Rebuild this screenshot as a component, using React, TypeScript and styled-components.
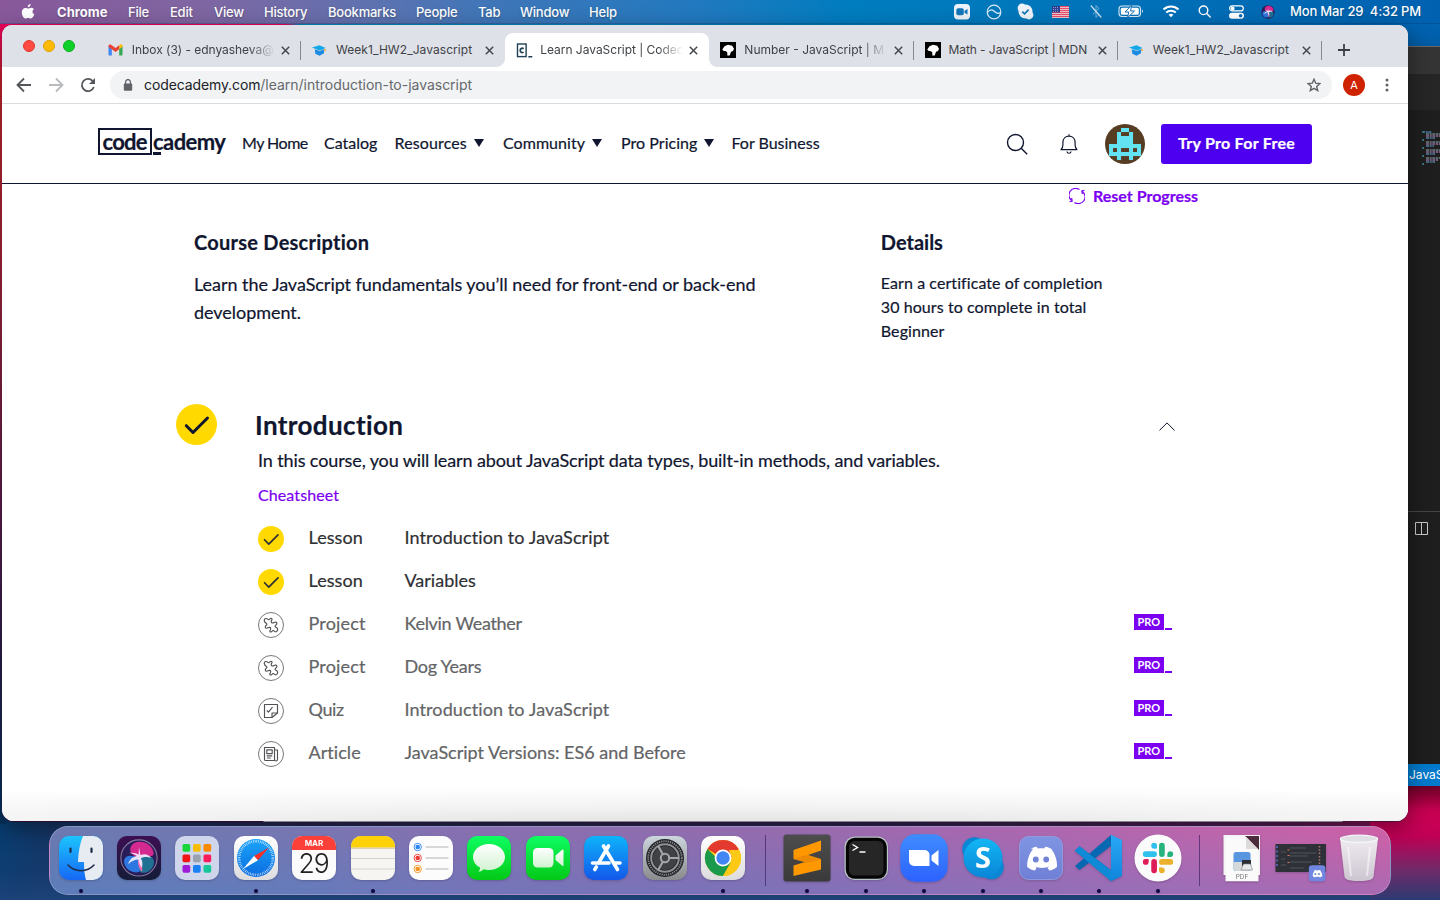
import React from 'react';
import styled, { createGlobalStyle, css } from 'styled-components';

const ui = '"Inter", "Liberation Sans", sans-serif';
const brand = '"Lato", "Liberation Sans", sans-serif';
const navy = '#10162f';
const violet = '#7b00f2';

const GlobalStyle = createGlobalStyle`
  * { box-sizing: border-box; }
  body { margin: 0; overflow: hidden; }
  h1, h2, p, ul { margin: 0; padding: 0; }
  svg { display: block; flex: none; }
`;

/* ---------- desktop ---------- */

const Desktop = styled.div`
  position: relative;
  width: 1440px;
  height: 900px;
  overflow: hidden;
  font-family: ${ui};
  background:
    linear-gradient(180deg, transparent 780px, rgba(24, 63, 118, 0.55) 870px, #1c4278 900px),
    linear-gradient(90deg, #003c6e 0, #14305c 50px, #2c1a40 300px, #3a1640 900px, #6a1040 1300px, #cc0050 1440px);
`;

const WallpaperTop = styled.div`
  position: absolute;
  top: 24px;
  left: 0;
  width: 1440px;
  height: 30px;
  background: linear-gradient(90deg, #ee005c 0 285px, #0088b8 300px, #0079b8 900px, #0062b0 1440px);
`;

const WallpaperEdge = styled.div`
  position: absolute;
  top: 24px;
  left: 0;
  width: 6px;
  height: 800px;
  background: linear-gradient(180deg, #ee005c 0, #c0262c 60px, #a5243a 240px, #5c1d4c 480px, #28204a 640px, #06325f 800px);
`;

const MenuBar = styled.header`
  position: relative;
  display: flex;
  align-items: center;
  height: 24px;
  color: #fff;
  font-size: 13px;
  font-weight: 500;
  letter-spacing: -0.22px;
  text-shadow: 0 1px 2px rgba(0, 0, 0, 0.25);
  background: linear-gradient(90deg, #88589a 0, #7f66a2 200px, #5f72b0 370px, #4176b8 480px, #2179bf 700px, #007dbf 850px, #0078bc 1000px, #0061b0 1440px);
  border-bottom: 1px solid rgba(0, 30, 80, 0.2);
`;

const AppleSlot = styled.div`
  width: 57px;
  padding-left: 21px;
`;

const MenuItem = styled.span<{ $w: number; $bold?: boolean }>`
  width: ${(p) => p.$w}px;
  padding-top: 1px;
  white-space: nowrap;
  ${(p) => p.$bold && css`font-weight: 700; letter-spacing: 0.05px;`}
`;

const StatusArea = styled.div`
  display: grid;
  grid-template-columns: 32px 31px 32px 38px 33px 38px 42px 24px 40px 23px;
  align-items: center;
  justify-items: center;
  margin-left: auto;
`;

const Clock = styled.time`
  width: 161px;
  padding: 0 0 1px 11px;
  white-space: pre;
  letter-spacing: -0.17px;
`;

/* ---------- editor window behind ---------- */

const EditorWindow = styled.section`
  position: absolute;
  top: 46px;
  left: 1380px;
  width: 80px;
  height: 740px;
  display: flex;
  flex-direction: column;
  padding-left: 28px;
  background: #1e1e1e;
  border-top: 1px solid #686868;
  box-shadow: 0 10px 26px rgba(0, 0, 0, 0.45);
`;
const EditorTitle = styled.div`
  height: 27px;
  background: #343435;
`;
const EditorTabs = styled.div`
  height: 36px;
  background: #262627;
`;
const EditorPane = styled.div`
  height: 401px;
  padding: 21px 0 0 14px;
`;
const EditorPanel = styled.div`
  flex: 1;
  border-top: 1px solid #454545;
  padding: 10px 0 0 7px;
`;
const EditorStatus = styled.div`
  height: 22px;
  line-height: 21px;
  font-size: 12px;
  color: #fff;
  padding-left: 1px;
  background: #007acc;
`;
const PinkGlow = styled.div`
  position: absolute;
  top: 786px;
  left: 1370px;
  width: 70px;
  height: 114px;
  background: linear-gradient(180deg, #a8003c 0, #cf0055 24px, #c00055 50px, #6f2a68 84px, #2c3a72 114px);
`;

/* ---------- browser window ---------- */

const BrowserWindow = styled.main`
  position: absolute;
  top: 25px;
  left: 2px;
  width: 1406px;
  height: 796px;
  display: flex;
  flex-direction: column;
  overflow: hidden;
  border-radius: 10px 10px 12px 12px;
  background: #fff;
`;
const WindowShadow = styled.div`
  position: absolute;
  top: 25px;
  left: 2px;
  width: 1406px;
  height: 797px;
  border-radius: 10px 10px 12px 12px;
  background: linear-gradient(90deg, #2d0c32 261px, #8a838f 262px 1340px, #4a1238 1341px);
  box-shadow: 0 6px 22px rgba(0, 0, 0, 0.4);
`;

const TabStrip = styled.div`
  display: flex;
  align-items: flex-end;
  height: 42px;
  background: #dee1e8;
`;
const TrafficLights = styled.div`
  display: flex;
  gap: 8px;
  width: 94.8px;
  height: 42px;
  padding: 15px 0 0 21px;
`;
const Light = styled.span<{ $c: string; $b: string }>`
  width: 12px;
  height: 12px;
  border-radius: 50%;
  background: ${(p) => p.$c};
  border: 1px solid ${(p) => p.$b};
`;
const Tab = styled.div<{ $active?: boolean; $line?: boolean }>`
  position: relative;
  display: flex;
  align-items: center;
  width: 204.2px;
  height: 34px;
  padding: 0 8px 0 11px;
  border-radius: 8px 8px 0 0;
  color: #3f4246;
  ${(p) => p.$active && css`
    background: #fff;
    &::before, &::after {
      content: '';
      position: absolute;
      bottom: 0;
      width: 8px;
      height: 8px;
    }
    &::before { left: -8px; background: radial-gradient(circle at 0 0, transparent 7.5px, #fff 8px); }
    &::after { right: -8px; background: radial-gradient(circle at 100% 0, transparent 7.5px, #fff 8px); }
  `}
  ${(p) => p.$line && css`
    &::after {
      content: '';
      position: absolute;
      right: 0;
      top: 8px;
      width: 1px;
      height: 19px;
      background: #85888d;
    }
  `}
`;
const TabIcon = styled.span`
  width: 24px;
`;
const TabTitle = styled.span<{ $fade?: boolean; $ls?: number }>`
  flex: 1;
  overflow: hidden;
  white-space: nowrap;
  font-size: 12px;
  line-height: 16px;
  letter-spacing: ${(p) => p.$ls ?? 0.06}px;
  ${(p) => p.$fade && css`mask-image: linear-gradient(90deg, #000 118px, transparent 143px);`}
`;
const TabClose = styled.span`
  width: 15px;
  display: flex;
  justify-content: center;
`;
const NewTab = styled.span`
  display: flex;
  align-items: center;
  height: 34px;
  padding-left: 16px;
`;

const Toolbar = styled.div`
  display: flex;
  align-items: center;
  height: 37px;
  background: #fff;
  border-bottom: 1px solid #dadce0;
`;
const NavButtons = styled.div`
  display: grid;
  grid-template-columns: 32px 32px 32px;
  justify-items: center;
  width: 108px;
  padding-left: 6px;
`;
const Omnibox = styled.div`
  display: flex;
  align-items: center;
  width: 1222px;
  height: 28px;
  padding: 0 11px 0 12px;
  border-radius: 14px;
  background: #f1f3f4;
`;
const Url = styled.span`
  flex: 1;
  padding: 0 0 1px 10px;
  font-size: 14px;
  color: #66696d;
  letter-spacing: -0.02px;
`;
const Host = styled.span`
  color: #202124;
  letter-spacing: -0.11px;
`;
const Profile = styled.span`
  display: grid;
  place-items: center;
  width: 22px;
  height: 22px;
  margin: 0 16px 0 11px;
  border-radius: 50%;
  background: #cf2200;
  color: #fff;
  font-size: 11px;
`;

/* ---------- site ---------- */

const Site = styled.div`
  flex: 1;
  font-family: ${brand};
  font-variant-ligatures: none;
  -webkit-text-stroke: 0.2px;
  color: ${navy};
  background:
    radial-gradient(ellipse 1380px 38px at 50% 106%, #e2e2e2 0, rgba(238, 238, 238, 0.7) 45%, rgba(255, 255, 255, 0) 100%) bottom / 100% 38px no-repeat,
    #fff;
`;
const SiteHeader = styled.header`
  display: flex;
  align-items: center;
  height: 80px;
  padding: 0 96px;
  border-bottom: 1px solid ${navy};
`;
const Logo = styled.div`
  display: flex;
  align-items: flex-start;
  width: 144px;
  height: 27px;
  margin-top: -5px;
  font-size: 22px;
  font-weight: 700;
  line-height: 24px;
`;
const LogoBox = styled.span`
  width: 54px;
  height: 27px;
  padding-left: 2.5px;
  border: 2.5px solid ${navy};
  letter-spacing: -0.75px;
`;
const LogoTail = styled.span`
  position: relative;
  padding: 2px 0 1px 1px;
  letter-spacing: -0.55px;
  &::after {
    content: '';
    position: absolute;
    left: 1px;
    bottom: 0;
    width: 8px;
    height: 2.5px;
    background: ${navy};
  }
`;
const SiteNav = styled.nav`
  display: grid;
  grid-template-columns: 82px 70.5px 108.5px 118px 110.5px 100px;
  padding-bottom: 2px;
  font-size: 16px;
`;
const NavLink = styled.a<{ $ls?: number }>`
  display: flex;
  align-items: center;
  gap: 7px;
  white-space: nowrap;
  letter-spacing: ${(p) => p.$ls ?? 0}px;
  svg { margin-top: 1px; }
`;
const Actions = styled.div`
  display: flex;
  align-items: center;
  margin-left: auto;
`;
const BellSlot = styled.span`
  margin: 0 27px 0 32px;
`;
const TryPro = styled.button`
  width: 151px;
  height: 40px;
  margin-left: 16px;
  padding: 0 0 3px;
  border: 0;
  border-radius: 3px;
  background: #4d00f0;
  color: #fff;
  font: 700 16px ${brand};
  letter-spacing: 0.27px;
`;
const ResetRow = styled.div`
  display: flex;
  align-items: center;
  gap: 8px;
  height: 22px;
  margin-bottom: 2px;
  padding-left: 1067px;
  font-size: 16px;
  font-weight: 700;
  color: ${violet};
  svg { margin-top: 2px; }
`;
const Overview = styled.section`
  display: grid;
  grid-template-columns: 686.8px 1fr;
  height: 196px;
  padding: 20px 0 0 192px;
`;
const Subheading = styled.h2<{ $ls?: number }>`
  font-size: 20px;
  font-weight: 700;
  line-height: 28px;
  letter-spacing: ${(p) => p.$ls ?? 0}px;
`;
const Lead = styled.p`
  width: 590px;
  margin-top: 14px;
  font-size: 18px;
  line-height: 28px;
  letter-spacing: -0.04px;
`;
const Details = styled.ul`
  margin-top: 15px;
  list-style: none;
  font-size: 16px;
  line-height: 24px;
  letter-spacing: 0.08px;
`;
const ModuleHeader = styled.div`
  display: flex;
  align-items: center;
  width: 1173px;
  height: 41px;
  padding-left: 174px;
`;
const ModuleTitle = styled.h1`
  flex: 1;
  padding-left: 38px;
  font-size: 26px;
  font-weight: 700;
  line-height: 36px;
  letter-spacing: 0.38px;
`;
const ModuleChevron = styled.span`
  margin-top: 4px;
`;
const ModuleBody = styled.div`
  width: 1170px;
  padding-left: 256px;
`;
const ModuleText = styled.p`
  margin-top: 1px;
  font-size: 18px;
  line-height: 28px;
  letter-spacing: -0.115px;
`;
const Cheatsheet = styled.a`
  display: block;
  margin: 9px 0 9.5px;
  font-size: 16px;
  line-height: 24px;
  letter-spacing: 0.1px;
  color: ${violet};
`;
const LessonRow = styled.div<{ $done?: boolean }>`
  display: grid;
  grid-template-columns: 50.5px 96px 1fr 38px;
  align-items: center;
  height: 43px;
  font-size: 18px;
  line-height: 26px;
  letter-spacing: 0.06px;
  color: ${(p) => (p.$done ? '#2f3033' : '#636466')};
`;
const LessonText = styled.span<{ $ls?: number }>`
  padding-bottom: 2px;
  letter-spacing: ${(p) => p.$ls ?? 0.06}px;
`;
const LessonIcon = styled.span`
  padding-top: 2px;
`;
const ProBadge = styled.span`
  display: flex;
  align-items: flex-end;
  gap: 1.5px;
  height: 16px;
  margin-top: -4px;
  &::after {
    content: '';
    width: 7px;
    height: 2.5px;
    background: ${violet};
  }
`;
const ProLabel = styled.span`
  width: 29.5px;
  height: 16px;
  background: ${violet};
  color: #fff;
  font-size: 11px;
  font-weight: 700;
  line-height: 16px;
  text-align: center;
  letter-spacing: 0;
  -webkit-text-stroke: 0;
`;

/* ---------- dock ---------- */

const Dock = styled.footer`
  position: absolute;
  top: 826px;
  left: 49px;
  width: 1342px;
  height: 69px;
  display: flex;
  padding: 7px 0 0 1.5px;
  border-radius: 19px;
  border: 1px solid rgba(255, 255, 255, 0.22);
  background:
    linear-gradient(180deg, rgba(255, 90, 160, 0.07), rgba(80, 130, 210, 0.28)),
    linear-gradient(90deg, #617bb0 0, #6d78b2 250px, #8070b0 420px, #8c6cae 700px, #a468b0 950px, #b866ac 1150px, #cc60a6 1342px);
`;
const DockSlot = styled.div<{ $dot?: boolean }>`
  display: flex;
  flex-direction: column;
  align-items: center;
  gap: 7px;
  width: 58.4px;
  filter: drop-shadow(0 1px 1px rgba(0, 0, 0, 0.18));
  ${(p) => p.$dot && css`
    &::after {
      content: '';
      width: 4px;
      height: 4px;
      border-radius: 50%;
      background: #0d0640;
    }
  `}
`;
const DockDivider = styled.div`
  width: 26px;
  display: flex;
  justify-content: center;
  padding-top: 1px;
  &::after {
    content: '';
    width: 1px;
    height: 51px;
    background: rgba(50, 20, 90, 0.6);
  }
`;

/* ---------- icons ---------- */

const Apple = () => (
  <svg width="14" height="17" viewBox="0 0 14 17" fill="#fff">
    <path d="M9.6 1c.1 1.700-1.300 3.300-2.900 3.200C6.500 2.700 8 1.100 9.600 1zM12.900 6.300c-2 1.200-1.800 4.100.4 5-.6 1.800-1.900 4.200-3.400 4.200-1 0-1.400-.6-2.700-.6s-1.700.6-2.700.6C2.600 15.600.8 12.200.8 9.300c0-2.700 1.700-4.400 3.600-4.400 1.200 0 2.100.7 2.800.7.700 0 1.700-.8 3.200-.8 1 0 1.900.5 2.500 1.500z" />
  </svg>
);

const SiriOrb = () => (
  <>
    <circle cx="24" cy="24" r="23" fill="#2a1c58" />
    <path d="M24 24C8 20 10 4 24 3s20 12 19 16-12 4-19 5z" fill="#d42a90" />
    <path d="M24 24C6 16 2 26 6 34s14 10 18 8 2-12 0-18z" fill="#2c78e0" />
    <path d="M24 24c14-6 22 0 19 9s-12 11-16 10-3-12-3-19z" fill="#1f7f9c" opacity=".85" />
    <path d="M23 24c4 5 6 12 5 18-4-3-6-11-5-18z" fill="#ff6fb4" />
    <path d="M24 10c1 5 1.500 8 2 10 6-2 10-1 14 4-7-2-10-1-13.500.5 2 3 2.500 7 1.500 12-3-3-4-7-4.500-10.500-5 0-9 2-13.500 6 1.500-6 6-9.500 11-10.500-3-2.500-6-3.500-10-4 5-1 9 0 12.500 2z" fill="#f4efff" opacity=".9" />
  </>
);

const StatusIcons = () => (
  <StatusArea>
    <svg width="16" height="16" viewBox="0 0 16 16"><rect width="16" height="15.500" rx="4" fill="#eef3fa" /><rect x="2.300" y="4.300" width="7.500" height="7" rx="1.800" fill="#1476b8" /><path d="M10.500 6.800L13.500 5v5.600l-3-1.800z" fill="#1476b8" /></svg>
    <svg width="16" height="16" viewBox="0 0 16 16" fill="none" stroke="#e2ecf7" strokeWidth="1.200"><circle cx="8" cy="8" r="6.800" /><path d="M1.500 8.500C4.500 4.500 7 6 8.500 7.500s3.500 2.800 6 1" /></svg>
    <svg width="17" height="17" viewBox="0 0 17 17"><circle cx="8.500" cy="8.500" r="7" fill="#eef3fa" /><circle cx="5" cy="5" r="4.400" fill="#eef3fa" /><circle cx="12" cy="12" r="4.400" fill="#eef3fa" /><path d="M5.300 8.600l2.300 2.300 4-4.300" fill="none" stroke="#1476b8" strokeWidth="1.700" /></svg>
    <svg width="17" height="12" viewBox="0 0 17 12"><rect width="17" height="12" fill="#f5e8ea" />{[0, 2, 4, 6, 8, 10].map((y) => <rect key={y} y={y + 0.2} width="17" height="1" fill="#e5274a" />)}<rect width="8" height="6.500" fill="#2f3f92" />{[1.500, 3.500, 5.500].map((x) => [1.500, 3.500, 5.200].map((y) => <circle key={x + '-' + y} cx={x} cy={y} r=".45" fill="#fff" />))}</svg>
    <svg width="12" height="15" viewBox="0 0 12 15" fill="none" stroke="#9fc6e6" strokeWidth="1"><path d="M2.800 4.500L9 10.500 6 13.500v-12l3 3-6.200 6" opacity=".75" /><path d="M.8 1.500l10.500 12" stroke="#c7dff2" strokeWidth="1.200" /></svg>
    <svg width="26" height="13" viewBox="0 0 26 13"><rect x="1" y="1" width="21.500" height="10.500" rx="3" fill="none" stroke="#dbe8f5" strokeWidth="1.100" /><rect x="2.800" y="2.800" width="18" height="7" rx="1.500" fill="#fff" /><path d="M24 4.500v3.600c1.200-.6 1.200-3 0-3.600z" fill="#dbe8f5" /><path d="M13.600.3L7 7h3.800l-1.300 5.700L16.500 6h-3.900z" fill="#fff" stroke="#1670b6" strokeWidth="1" /></svg>
    <svg width="18" height="13" viewBox="0 0 18 13" fill="none" stroke="#fff" strokeWidth="2"><path d="M1.500 4.600c4.300-4 10.700-4 15 0M4.200 7.500c2.700-2.500 6.900-2.500 9.600 0" /><path d="M9 12.300L6.600 9.700c1.300-1.200 3.500-1.200 4.800 0z" fill="#fff" stroke="none" /></svg>
    <svg width="13" height="13" viewBox="0 0 13 13" fill="none" stroke="#fff" strokeWidth="1.400"><circle cx="5.500" cy="5.300" r="4.300" /><path d="M8.700 8.500l3.500 3.600" strokeLinecap="round" /></svg>
    <svg width="15" height="14" viewBox="0 0 15 14"><rect x=".7" y=".9" width="13.600" height="5" rx="2.500" fill="none" stroke="#fff" strokeWidth="1.200" /><circle cx="3.700" cy="3.400" r="1.900" fill="#fff" /><rect y="7.800" width="15" height="6" rx="3" fill="#fff" /><circle cx="11.600" cy="10.800" r="1.800" fill="#0a6bb4" /></svg>
    <svg width="14" height="14" viewBox="0 0 48 48"><SiriOrb /></svg>
  </StatusArea>
);

const GmailIcon = () => (
  <svg width="15" height="12" viewBox="0 0 15 12"><path d="M.5 2v8.500c0 .6.400 1 1 1h2.300V4.500z" fill="#4285f4" /><path d="M14.500 2v8.500c0 .6-.4 1-1 1h-2.300V4.500z" fill="#34a853" /><path d="M11.200 1.300v4l3.300-2.500V1.800c0-1.300-1.400-1.900-2.400-1.200z" fill="#fbbc04" /><path d="M.5 2.800l3.300 2.500L7.500 8l3.700-2.700v-4L7.500 4 3 .7C1.900 0 .5.600.5 1.900z" fill="#ea4335" /></svg>
);
const CapIcon = () => (
  <svg width="14" height="11" viewBox="0 0 14 11"><path d="M0 2.600L7.500.3 13.500 3 8 5.700z" fill="#13a8e8" /><path d="M2.800 4.300L8 6.300l4-2v4L7.500 10.800 3.300 8.700z" fill="#1b8ae0" /><circle cx="13" cy="5" r="1" fill="#f2a33a" /></svg>
);
const CodecademyIcon = () => (
  <svg width="17" height="15" viewBox="0 0 17 15" fill="none" stroke="#204056"><rect x="1.500" y="1" width="8.600" height="12.600" strokeWidth="1.400" /><path d="M7.600 5.800c-1-1-3.400-.7-3.400 1.600s2.400 2.600 3.400 1.600" strokeWidth="1.700" /><path d="M12.300 13.800h4" strokeWidth="1.500" /></svg>
);
const MdnIcon = () => (
  <svg width="16" height="16" viewBox="0 0 16 16"><rect width="16" height="16" fill="#000" /><path d="M2.300 7.500L4.500 4.300 8 2.800l4.200.9 1.800 3-1 2.300-2 .8-1.300 3.600H7.300V10.500L6 9.300l-2.700-.5z" fill="#fff" /></svg>
);
const CloseIcon = () => (
  <svg width="9" height="9" viewBox="0 0 9 9" stroke="#45484c" strokeWidth="1.500"><path d="M.8.8l7.400 7.400M8.200.8L.8 8.200" /></svg>
);
const Caret = () => <svg width="10" height="8" viewBox="0 0 10 8"><path d="M0 0h10L5 8z" fill={navy} /></svg>;

const cells = ['...XX...', '..X..X..', '..XXXX..', '..XXXX..', 'XXXXXXXX', 'X.X..X.X', 'XXXXXXXX', '..X..X..'];
const UserAvatar = () => (
  <svg width="40" height="40" viewBox="0 0 40 40">
    <circle cx="20" cy="20" r="20" fill="#563c22" />
    {cells.flatMap((row, y) => [...row].map((c, x) => c === 'X' && <rect key={`${x}-${y}`} x={4 + x * 4} y={4 + y * 4} width="4.050" height="4.050" fill="#63e2f4" />))}
  </svg>
);

const DoneIcon = ({ size, color, weight }: { size: number; color: string; weight: number }) => (
  <svg width={size} height={size} viewBox="0 0 41 41"><circle cx="20.500" cy="20.500" r="20.500" fill="#ffd900" /><path d="M10.300 21.700l6.700 6.800L31.500 14" fill="none" stroke={color} strokeWidth={weight} strokeLinecap="round" strokeLinejoin="round" /></svg>
);

const kindGlyphs: Record<string, React.ReactNode> = {
  Project: <path d="M6.800 9.600C5.600 8 6.500 6.300 8.200 6.500c1.400.1 1.500 1.500 2.800 1.200.8-.2.900-1.500 2-1.500s1.300 1.300.6 2.200c-.8 1-.4 2.400.8 2.600 1.500.2 2-1.300 3.400-.9 1.200.4 1.400 1.700.6 2.600-.6.700-1.500.6-1.300 1.600.2 1.300 2.200 1 2.500 2.500.2 1.600-.7 3.300-2.200 3-1.200-.2-1.200-1.500-2.400-1.300-1 .2-.9 1.500-2 1.500-1.300 0-1.500-1.300-.7-2.200.8-1 .4-2.300-.8-2.400-1.300-.1-1.900 1.200-3.200.8-1.200-.4-1.300-1.700-.5-2.500.6-.6 1.400-.8 1.100-1.700-.3-1-1.500-1-2.100-1.900z" />,
  Quiz: <><path d="M19.500 6.500h-13v13H14l5.500-4.500z" /><path d="M14 19.500V15h5.500M8.800 12.500l1.700 1.700 4-5" /></>,
  Article: <><path d="M6.500 6.500h10v13h-9a1 1 0 01-1-1zM16.500 9h3v9.500a1.500 1.500 0 01-3 0" /><path d="M8.800 8.800h5.400v3.800H8.800zM8.800 14.800h5.400M8.800 17h4" /></>,
};
const KindIcon = ({ kind }: { kind: string }) => (
  <svg width="26" height="26" viewBox="0 0 26 26" fill="none" stroke="#505154" strokeWidth="1.150" strokeLinejoin="round"><circle cx="13" cy="13" r="12.500" strokeWidth="1" stroke="#77787a" />{kindGlyphs[kind]}</svg>
);

const Tile = ({ fill }: { fill: string }) => <rect x="2" y="2" width="44" height="44" rx="10" fill={fill} />;
const AppIcon = ({ children }: { children: React.ReactNode }) => <svg width="48" height="48" viewBox="0 0 48 48">{children}</svg>;

const Gradients = () => (
  <svg width="0" height="0">
    <defs>
      {([
        ['gFinder', '#1cc4fd', '#1668f5'], ['gSilver', '#ffffff', '#dcdcde'], ['gCompass', '#1ba4f8', '#0b6be0'],
        ['gGreen', '#0dfd62', '#04c916'], ['gBubble', '#ffffff', '#d0f2d0'], ['gStore', '#0db4fb', '#1457ea'],
        ['gGear', '#ccd6dd', '#8a8a8c'], ['gZoom', '#3f8cff', '#2d62ff'], ['gSkype', '#12b6f4', '#0a86d8'],
        ['gDiscord', '#7f95e2', '#6f7fd6'], ['gSublime', '#4d4d4d', '#3a3a3a'], ['gNight', '#3c0f52', '#141c38'],
        ['gTrash', '#f4f4f6', '#cfcdd4'], ['gCode', '#2aa8f5', '#0f84dc'],
      ] as const).map(([id, a, b]) => (
        <linearGradient key={id} id={id} x1="0" y1="0" x2="0" y2="1"><stop offset="0" stopColor={a} /><stop offset="1" stopColor={b} /></linearGradient>
      ))}
    </defs>
  </svg>
);
const GradientHost = styled.div`
  position: absolute;
  width: 0;
  height: 0;
`;

const discordFace = 'M15 15.500c3-1.500 4.500-1.600 5.200-1.700l1 1.600c1.800-.3 3.800-.3 5.600 0l1-1.600c.7.1 2.200.2 5.200 1.700 3.500 5 5.500 10.500 5 16-3 2.400-5.300 3-6.600 3.200l-1.700-2.500 2-1.200c-4.400 2-9 2-13.400 0l2 1.200-1.700 2.500c-1.300-.2-3.600-.8-6.600-3.200-.5-5.500 1.500-11 5-16z';

const FinderIcon = () => (
  <AppIcon><Tile fill="url(#gFinder)" /><path d="M26 2h10a10 10 0 0110 10v24a10 10 0 01-10 10h-7c-1.500-5-2-11-2-18h-6c.3-10 2-19 5-26z" fill="#e7ecf3" /><path d="M13.500 14.500v3.500M34.500 14.500v3.500" stroke="#1c2b48" strokeWidth="2.200" strokeLinecap="round" /><path d="M11 31c7 7.500 19 7.500 26 0" fill="none" stroke="#1c2b48" strokeWidth="1.500" strokeLinecap="round" /></AppIcon>
);
const SiriIcon = () => (
  <AppIcon><Tile fill="url(#gNight)" /><g transform="translate(5.500 5.500) scale(.77)"><SiriOrb /><circle cx="24" cy="24" r="23.500" fill="none" stroke="#9c93b4" strokeWidth="1.400" opacity=".8" /></g></AppIcon>
);
const padColors = ['#18d63a', '#f7bd05', '#fb8a05', '#f01414', '#9aa3ad', '#fa1c5c', '#a01bd8', '#1a80f5', '#17c79a'];
const LaunchpadIcon = () => (
  <AppIcon><Tile fill="#cfd5ea" />{padColors.map((c, i) => <rect key={c} x={9.500 + (i % 3) * 10.500} y={10 + Math.floor(i / 3) * 10.500} width="7.700" height="7.700" rx="1.600" fill={c} />)}</AppIcon>
);
const SafariIcon = () => (
  <AppIcon><Tile fill="url(#gSilver)" /><circle cx="24" cy="24" r="19" fill="url(#gCompass)" /><circle cx="24" cy="24" r="16.800" fill="none" stroke="#fff" strokeWidth="2.600" strokeDasharray=".6 1.160" opacity=".9" /><path d="M37 13.500L26 26.300 22 22z" fill="#f5302c" /><path d="M11 35L22 22l4 4.300z" fill="#fff" /></AppIcon>
);
const CalendarIcon = () => (
  <AppIcon><Tile fill="#fbfbfb" /><path d="M2 16v-4A10 10 0 0112 2h24a10 10 0 0110 10v4z" fill="#fa4039" /><text x="24" y="12.400" textAnchor="middle" fontFamily="Inter" fontSize="8" fontWeight="700" fill="#fff">MAR</text><text x="23.500" y="38.500" textAnchor="middle" fontFamily="Inter" fontSize="26.500" fontWeight="300" letterSpacing="-1" fill="#222">29</text></AppIcon>
);
const NotesIcon = () => (
  <AppIcon><Tile fill="#f7f5f2" /><path d="M2 13.500V12A10 10 0 0112 2h24a10 10 0 0110 10v1.500z" fill="#fdd107" /><path d="M2 14.200h44" stroke="#c8b98a" strokeWidth=".9" /><path d="M2 24.500h44M2 35h44" stroke="#d5d2ce" /></AppIcon>
);
const RemindersIcon = () => (
  <AppIcon><Tile fill="#fcfcfc" />{['#2a84f5', '#f13a35', '#f59420'].map((c, i) => <g key={c}><circle cx="10.700" cy={13 + i * 11} r="3.700" fill="none" stroke={c} strokeWidth=".9" /><circle cx="10.700" cy={13 + i * 11} r="2.300" fill={c} /><path d={`M18.500 ${13 + i * 11}h23`} stroke="#cfcfd1" strokeWidth="1.600" /></g>)}</AppIcon>
);
const MessagesIcon = () => (
  <AppIcon><Tile fill="url(#gGreen)" /><path d="M24 10c9 0 16 5.700 16 13s-7 13-16 13c-2 0-4-.3-5.500-.8-1.300 1.400-3 2.400-5 2.600 1-1.200 1.600-2.600 1.500-4.300C10.500 31 8 27.300 8 23c0-7.300 7-13 16-13z" fill="url(#gBubble)" /></AppIcon>
);
const FaceTimeIcon = () => (
  <AppIcon><Tile fill="url(#gGreen)" /><rect x="9" y="14" width="20.500" height="19.500" rx="4.500" fill="url(#gBubble)" /><path d="M31.500 21.500l7-6c.5-.3 1 0 1 .5v15.500c0 .5-.5.800-1 .5l-7-6z" fill="url(#gBubble)" /></AppIcon>
);
const AppStoreIcon = () => (
  <AppIcon><Tile fill="url(#gStore)" /><g stroke="#fff" strokeWidth="3.600" strokeLinecap="round"><path d="M26.500 12L16.500 29M21.500 12l14 23.500M10.500 29h16.500M32.500 29h5.500M14.300 33l-1.500 2.500" /></g></AppIcon>
);
const SettingsIcon = () => (
  <AppIcon><Tile fill="url(#gGear)" /><circle cx="24" cy="24" r="19" fill="#242528" /><circle cx="24" cy="24" r="16.800" fill="none" stroke="#8b8e92" strokeWidth="1.800" strokeDasharray="1.200 1" /><circle cx="24" cy="24" r="13.800" fill="none" stroke="#8e9195" strokeWidth="2" /><circle cx="24" cy="24" r="12" fill="#3f4144" /><circle cx="24" cy="24" r="4.200" fill="none" stroke="#a5a8ab" strokeWidth="2" /><path d="M28 24h10M22 20.500l-5-8.800M22 27.500l-5 8.800" stroke="#a5a8ab" strokeWidth="2" /></AppIcon>
);
const ChromeIcon = () => (
  <AppIcon><Tile fill="url(#gSilver)" /><circle cx="24" cy="24" r="18" fill="#fbc916" /><path d="M24 24L8.400 15A18 18 0 0139.600 15L24 16z" fill="#e23a2e" /><path d="M8.400 15a18 18 0 0015.600 27L31.800 28.500 24 30z" fill="#1c9a4c" /><path d="M39.600 15A18 18 0 0124 42l7.800-13.500L31 16z" fill="#fbc916" /><path d="M39.600 15H24v8h8z" fill="#e23a2e" /><path d="M39.600 16H30l2 6 9.800 0a18 18 0 00-2.200-6z" fill="#fbc916" /><circle cx="24" cy="24" r="8.400" fill="#fff" /><circle cx="24" cy="24" r="6.700" fill="#4285f4" /></AppIcon>
);
const SublimeIcon = () => (
  <AppIcon><rect x=".5" y=".5" width="47" height="47" rx="3" fill="url(#gSublime)" /><path d="M10.500 16L38 6.500v10L25 21l13 4v10.500L10.500 42V31.500L22 28l-11.500-3z" fill="#ff9800" /><path d="M10.500 25l12-4L38 25.500 24 29z" fill="#e07e08" opacity=".6" /></AppIcon>
);
const TerminalIcon = () => (
  <AppIcon><rect x="2.500" y="2.500" width="43.500" height="43.500" rx="10" fill="#b9c2c4" /><rect x="3.800" y="3.800" width="41" height="41" rx="9" fill="#050505" /><rect x="7" y="7" width="34.500" height="34.500" rx="5.500" fill="#262626" /><path d="M10.500 10.500l5 3-5 3M17.500 18h6" fill="none" stroke="#fff" strokeWidth="1.400" /></AppIcon>
);
const ZoomIcon = () => (
  <AppIcon><rect x=".3" y=".3" width="47.400" height="47.400" rx="15" fill="url(#gZoom)" /><path d="M9 16h15.500a5 5 0 015 5v11H14a5 5 0 01-5-5zM31.500 21.500l7-5.500v16l-7-5.500z" fill="#fff" /></AppIcon>
);
const SkypeIcon = () => (
  <AppIcon><circle cx="15.500" cy="15.500" r="12.300" fill="#0a86d4" /><circle cx="32.500" cy="33" r="12.300" fill="#0a86d4" /><circle cx="24" cy="24" r="19.500" fill="url(#gSkype)" /><text x="24" y="34" textAnchor="middle" fontFamily="Open Sans" fontSize="29" fontWeight="700" fill="#fff">S</text></AppIcon>
);
const DiscordIcon = () => (
  <AppIcon><rect x="2.500" y="2.500" width="43" height="43" rx="9" fill="url(#gDiscord)" stroke="#93a3e6" strokeWidth=".8" /><path d={discordFace} transform="translate(-3.400 -3) scale(1.140)" fill="#fff" /><circle cx="18.800" cy="25.500" r="2.900" fill="#7083d4" /><circle cx="29.200" cy="25.500" r="2.900" fill="#7083d4" /></AppIcon>
);
const VsCodeIcon = () => (
  <AppIcon><path d="M36 47L0 16.500l4.500-4.200L36 36z" fill="#0a7cc8" /><path d="M36 1L0 32l4.500 4L36 12z" fill="#0868b2" /><path d="M0 17l4.500-4.500L36 36.500V47z" fill="#0f8ad6" /><path d="M36 .8l11 5.300v36L36 47.300z" fill="url(#gCode)" /></AppIcon>
);
const SlackIcon = () => (
  <AppIcon>
    <circle cx="24" cy="24" r="23.500" fill="#fcfbfc" />
    <g strokeWidth="5.700" strokeLinecap="round">
      <path d="M11.700 20.100h8.400" stroke="#2fc0ee" /><path d="M27.900 11.700v8.400" stroke="#26b47c" />
      <path d="M27.900 27.900h8.400" stroke="#ecb12c" /><path d="M20.100 27.900v8.400" stroke="#e01c58" />
    </g>
    <circle cx="20.100" cy="11.700" r="2.850" fill="#2fc0ee" /><rect x="20.100" y="11.700" width="2.850" height="2.850" fill="#2fc0ee" />
    <circle cx="36.300" cy="20.100" r="2.850" fill="#26b47c" /><rect x="33.450" y="20.100" width="2.850" height="2.850" fill="#26b47c" />
    <circle cx="27.900" cy="36.300" r="2.850" fill="#ecb12c" /><rect x="25.050" y="33.450" width="2.850" height="2.850" fill="#ecb12c" />
    <circle cx="11.700" cy="27.900" r="2.850" fill="#e01c58" /><rect x="11.700" y="25.050" width="2.850" height="2.850" fill="#e01c58" />
  </AppIcon>
);
const PdfIcon = () => (
  <AppIcon><path d="M5.500 1H42v40H5.500z" fill="#f5f3f4" /><path d="M27 2h14v14z" fill="#4a2c3c" /><path d="M7.500 3H28l12.500 13.500V47.300h-33z" fill="#fafafa" /><path d="M28 3v12h12z" fill="#dcdadb" /><rect x="15.500" y="18" width="17" height="19" rx="2.500" fill="#5a96e0" /><path d="M15.500 28h17v6a3 3 0 01-3 3h-11a3 3 0 01-3-3z" fill="#d6d9da" /><path d="M24 26h9v6h-9z" fill="#2a2d33" /><path d="M23 36l2.500-6h7l2 6z" fill="#e9eaeb" stroke="#7a7c80" strokeWidth=".6" /><text x="24" y="45.400" textAnchor="middle" fontFamily="Inter" fontSize="6.500" fill="#77777a">PDF</text></AppIcon>
);
const MinimizedIcon = () => (
  <svg width="54" height="48" viewBox="0 0 54 48"><rect x="1.500" y="10" width="50.500" height="28" fill="#2f3138" /><path d="M3 12v22" stroke="#5a6ad0" strokeWidth="1.500" strokeDasharray="2 2.500" /><path d="M7 18h5M7 25h4M7 31h5M16 14h16M16 19h26M16 22h18M16 28h22M16 34h14" stroke="#5a5d65" strokeWidth=".8" /><path d="M14.500 15.500v1M14.500 21v1M14.500 28v1" stroke="#e0785a" strokeWidth="2" /><path d="M45.500 12v24" stroke="#a87c72" strokeWidth="1.500" strokeDasharray="1.500 1.800" /><g transform="translate(34.500 31) scale(.36)"><rect x="1" y="1" width="46" height="44" rx="9" fill="#7186e0" /><path d={discordFace} fill="#fff" /><circle cx="19" cy="25" r="3" fill="#7083d4" /><circle cx="29" cy="25" r="3" fill="#7083d4" /></g></svg>
);
const TrashIcon = () => (
  <AppIcon><path d="M5 4.500h38l-4.500 38c-.4 3-4.500 4.500-14.500 4.500S10 45.500 9.500 42.500z" fill="url(#gTrash)" opacity=".94" /><ellipse cx="24" cy="4.800" rx="18.700" ry="3.600" fill="#dfdee4" stroke="#f7f7fa" strokeWidth="1.200" /><path d="M13 13l3 29M35 13l-3 29" stroke="#fff" strokeWidth="2" opacity=".5" /></AppIcon>
);

/* ---------- data ---------- */

const menus: [string, number][] = [['File', 42], ['Edit', 44], ['View', 50], ['History', 64], ['Bookmarks', 88], ['People', 62], ['Tab', 42], ['Window', 69], ['Help', 40]];
const tabs = [
  { title: 'Inbox (3) - ednyasheva@', icon: <GmailIcon />, fade: true, line: true, ls: -0.04 },
  { title: 'Week1_HW2_Javascript', icon: <CapIcon /> },
  { title: 'Learn JavaScript | Codec', icon: <CodecademyIcon />, fade: true, active: true, ls: -0.02 },
  { title: 'Number - JavaScript | M', icon: <MdnIcon />, fade: true, line: true, ls: 0 },
  { title: 'Math - JavaScript | MDN', icon: <MdnIcon />, line: true, ls: -0.08 },
  { title: 'Week1_HW2_Javascript', icon: <CapIcon />, line: true },
];
const lessons = [
  { kind: 'Lesson', title: 'Introduction to JavaScript', done: true, ls: 0.1 },
  { kind: 'Lesson', title: 'Variables', done: true, ls: 0 },
  { kind: 'Project', title: 'Kelvin Weather', ls: -0.3 },
  { kind: 'Project', title: 'Dog Years', ls: -0.24 },
  { kind: 'Quiz', title: 'Introduction to JavaScript', ls: 0.1 },
  { kind: 'Article', title: 'JavaScript Versions: ES6 and Before', ls: 0 },
];
const kindSpacing: Record<string, number> = { Project: 0.16, Quiz: -0.35 };
const mainApps: [React.FC, boolean][] = [[FinderIcon, true], [SiriIcon, false], [LaunchpadIcon, false], [SafariIcon, true], [CalendarIcon, false], [NotesIcon, true], [RemindersIcon, false], [MessagesIcon, false], [FaceTimeIcon, false], [AppStoreIcon, false], [SettingsIcon, false], [ChromeIcon, true]];
const openApps: [React.FC, boolean][] = [[SublimeIcon, true], [TerminalIcon, true], [ZoomIcon, true], [SkypeIcon, true], [DiscordIcon, true], [VsCodeIcon, true], [SlackIcon, true]];
const stackApps: [React.FC, boolean][] = [[PdfIcon, false], [MinimizedIcon, false], [TrashIcon, false]];

const DockGroup = ({ apps }: { apps: [React.FC, boolean][] }) => <>{apps.map(([Icon, dot], i) => <DockSlot key={i} $dot={dot}><Icon /></DockSlot>)}</>;

const minimap = [10, 18, 14, 9, 3, 17, 18, 8, 3, 17, 18, 9, 3, 17, 12, 9, 3];

export default function App() {
  return (
    <Desktop>
      <GlobalStyle />
      <GradientHost><Gradients /></GradientHost>
      <WallpaperTop />
      <WallpaperEdge />
      <PinkGlow />
      <MenuBar>
        <AppleSlot><Apple /></AppleSlot>
        <MenuItem $w={71} $bold>Chrome</MenuItem>
        {menus.map(([label, w]) => <MenuItem key={label} $w={w}>{label}</MenuItem>)}
        <StatusIcons />
        <Clock>Mon Mar 29  4:32 PM</Clock>
      </MenuBar>

      <EditorWindow>
        <EditorTitle />
        <EditorTabs />
        <EditorPane>
          <svg width="18" height="34" viewBox="0 0 18 34" opacity=".85">
            {minimap.map((w, i) => <path key={i} d={`M${w < 5 ? 0 : i % 4 ? 4 : 0} ${1 + i * 2}h${w < 5 ? 2 : w}`} stroke={['#4b93b8', '#7d8f9c', '#a07ba8', '#5b8fb5'][i % 4]} strokeWidth="1.300" strokeDasharray="3 .7 2 .6" />)}
          </svg>
        </EditorPane>
        <EditorPanel>
          <svg width="13" height="13" viewBox="0 0 13 13" fill="none" stroke="#c8c8c8"><path d="M.5.5h12v12H.5zM6.500.5v12" /></svg>
        </EditorPanel>
        <EditorStatus>JavaScript</EditorStatus>
      </EditorWindow>

      <WindowShadow />
      <BrowserWindow>
        <TabStrip>
          <TrafficLights>
            <Light $c="#ff4b42" $b="#e2382f" />
            <Light $c="#ffbb00" $b="#dda000" />
            <Light $c="#0fd028" $b="#0cae1e" />
          </TrafficLights>
          {tabs.map((t, i) => (
            <Tab key={i} $active={t.active} $line={t.line}>
              <TabIcon>{t.icon}</TabIcon>
              <TabTitle $fade={t.fade} $ls={t.ls}>{t.title}</TabTitle>
              <TabClose><CloseIcon /></TabClose>
            </Tab>
          ))}
          <NewTab><svg width="12" height="12" viewBox="0 0 12 12" stroke="#3c4043" strokeWidth="1.800"><path d="M6 0v12M0 6h12" /></svg></NewTab>
        </TabStrip>

        <Toolbar>
          <NavButtons>
            <svg width="16" height="16" viewBox="0 0 16 16" fill="none" stroke="#54585c" strokeWidth="1.800"><path d="M15 8H2M8 1.500L1.500 8 8 14.500" /></svg>
            <svg width="16" height="16" viewBox="0 0 16 16" fill="none" stroke="#b9bbbe" strokeWidth="1.800"><path d="M1 8h13M8 1.500L14.500 8 8 14.500" /></svg>
            <svg width="16" height="16" viewBox="0 0 16 16" fill="none" stroke="#54585c" strokeWidth="1.800"><path d="M13.800 10A6.100 6.100 0 1112.600 4" /><path d="M15 1v6H9z" fill="#54585c" stroke="none" /></svg>
          </NavButtons>
          <Omnibox>
            <svg width="12" height="12" viewBox="0 0 12 12"><rect x="1.800" y="4.500" width="8.400" height="7.300" rx="1" fill="#5f6368" /><path d="M3.600 5V3a2.400 2.400 0 014.800 0v2" fill="none" stroke="#5f6368" strokeWidth="1.300" /></svg>
            <Url><Host>codecademy.com</Host>/learn/introduction-to-javascript</Url>
            <svg width="14" height="14" viewBox="0 0 14 14" fill="none" stroke="#5f6368" strokeWidth="1.400"><path d="M7 1.300l1.700 3.900 4.200.4-3.200 2.800 1 4.200L7 10.400l-3.700 2.200 1-4.200L1.100 5.600l4.200-.4z" /></svg>
          </Omnibox>
          <Profile>A</Profile>
          <svg width="12" height="14" viewBox="0 0 12 14" fill="#5f6368"><circle cx="6" cy="2" r="1.500" /><circle cx="6" cy="7" r="1.500" /><circle cx="6" cy="12" r="1.500" /></svg>
        </Toolbar>

        <Site>
          <SiteHeader>
            <Logo><LogoBox>code</LogoBox><LogoTail>cademy</LogoTail></Logo>
            <SiteNav>
              <NavLink $ls={-0.5}>My Home</NavLink>
              <NavLink>Catalog</NavLink>
              <NavLink $ls={0.13}>Resources <Caret /></NavLink>
              <NavLink $ls={0.04}>Community <Caret /></NavLink>
              <NavLink $ls={0.04}>Pro Pricing <Caret /></NavLink>
              <NavLink>For Business</NavLink>
            </SiteNav>
            <Actions>
              <svg width="22" height="22" viewBox="0 0 22 22" fill="none" stroke={navy} strokeWidth="1.400"><circle cx="9.500" cy="9.500" r="8" /><path d="M15.200 15.200l6 6" /></svg>
              <BellSlot>
                <svg width="18" height="20" viewBox="0 0 18 20" fill="none" stroke={navy} strokeWidth="1.200"><path d="M1 15.600h16c-1.500-1.300-1.900-2.600-1.900-4.600V8.500C15.100 4.500 12.500 2.100 9 2.100S2.900 4.500 2.900 8.500V11c0 2-.4 3.300-1.900 4.600zM9 .3v1.800M7 17.500c.2 2.300 3.800 2.300 4 0" strokeLinejoin="round" /></svg>
              </BellSlot>
              <UserAvatar />
              <TryPro>Try Pro For Free</TryPro>
            </Actions>
          </SiteHeader>

          <ResetRow>
            <svg width="16" height="16" viewBox="0 0 16 16" fill="none" stroke={violet} strokeWidth="1.200"><path d="M2.800 12.600A6.700 6.700 0 0110.500 1.600M13.200 3.400A6.700 6.700 0 015.500 14.400" /><path d="M15.300 2.400l-2.500.5.600 3.100M.7 13.600l2.500-.5-.6-3.100" /></svg>
            Reset Progress
          </ResetRow>

          <Overview>
            <div>
              <Subheading $ls={0.25}>Course Description</Subheading>
              <Lead>Learn the JavaScript fundamentals you’ll need for front-end or back-end development.</Lead>
            </div>
            <div>
              <Subheading>Details</Subheading>
              <Details>
                <li>Earn a certificate of completion</li>
                <li>30 hours to complete in total</li>
                <li>Beginner</li>
              </Details>
            </div>
          </Overview>

          <ModuleHeader>
            <DoneIcon size={41} color={navy} weight={3} />
            <ModuleTitle>Introduction</ModuleTitle>
            <ModuleChevron>
              <svg width="16" height="9" viewBox="0 0 16 9" fill="none" stroke={navy} strokeWidth="1"><path d="M.4 8.500L8 .9l7.600 7.600" /></svg>
            </ModuleChevron>
          </ModuleHeader>
          <ModuleBody>
            <ModuleText>In this course, you will learn about JavaScript data types, built-in methods, and variables.</ModuleText>
            <Cheatsheet>Cheatsheet</Cheatsheet>
            {lessons.map((l, i) => (
              <LessonRow key={i} $done={l.done}>
                <LessonIcon>{l.done ? <DoneIcon size={26} color="#2f3033" weight={2.700} /> : <KindIcon kind={l.kind} />}</LessonIcon>
                <LessonText $ls={kindSpacing[l.kind]}>{l.kind}</LessonText>
                <LessonText $ls={l.ls}>{l.title}</LessonText>
                {!l.done && <ProBadge><ProLabel>PRO</ProLabel></ProBadge>}
              </LessonRow>
            ))}
          </ModuleBody>
        </Site>
      </BrowserWindow>

      <Dock>
        <DockGroup apps={mainApps} />
        <DockDivider />
        <DockGroup apps={openApps} />
        <DockDivider />
        <DockGroup apps={stackApps} />
      </Dock>
    </Desktop>
  );
}
